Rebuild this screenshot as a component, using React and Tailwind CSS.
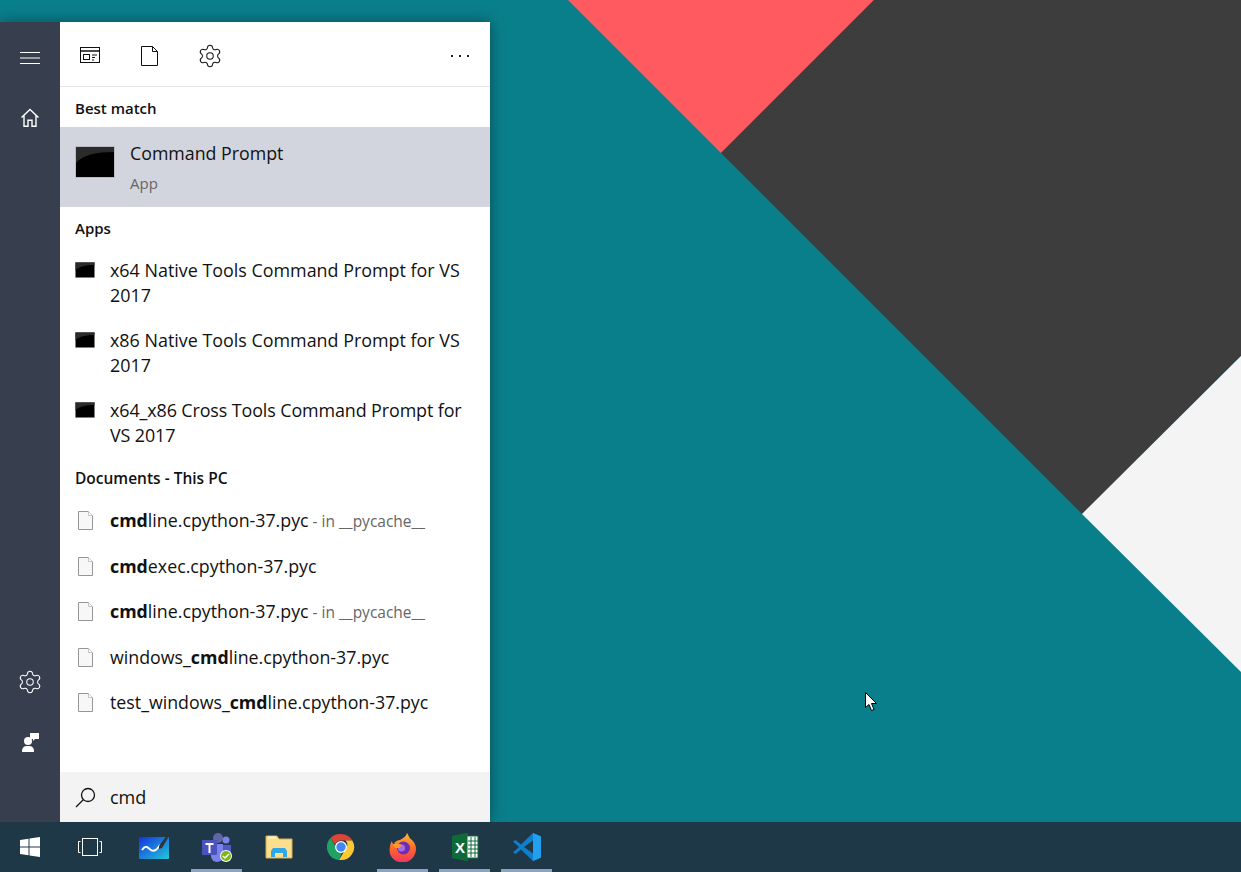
import React from 'react';
import { Settings } from 'lucide-react';

const FONT = "font-['Open_Sans','Noto_Sans',sans-serif]";

const apps = [
  { lines: ['x64 Native Tools Command Prompt for VS', '2017'], cls: '' },
  { lines: ['x86 Native Tools Command Prompt for VS', '2017'], cls: '' },
  { lines: ['x64_x86 Cross Tools Command Prompt for', 'VS 2017'], cls: 'tracking-[-0.1px]' },
];

const docs = [
  { pre: '', bold: 'cmd', post: 'line.cpython-37.pyc', note: ' - in __pycache__' },
  { pre: '', bold: 'cmd', post: 'exec.cpython-37.pyc' },
  { pre: '', bold: 'cmd', post: 'line.cpython-37.pyc', note: ' - in __pycache__' },
  { pre: 'windows_', bold: 'cmd', post: 'line.cpython-37.pyc' },
  { pre: 'test_windows_', bold: 'cmd', post: 'line.cpython-37.pyc' },
];

const TerminalIcon = ({ size }) => (
  <svg width={size} height={size * 0.8} viewBox="0 0 40 32" className="shrink-0">
    <rect x="0.5" y="0.5" width="39" height="31" fill="#000" stroke="#b9bcc4" />
    <path d="M1 17C7 9 22 6 39 6V1H1z" fill="#2b2b2b" />
  </svg>
);

const DocIcon = () => (
  <svg width="15" height="19" viewBox="0 0 15 19" className="shrink-0">
    <path d="M.5.5h10l4 4v14H.5z" fill="#f7f7f7" stroke="#969696" />
    <path d="M10.500.5v4h4" fill="#fff" stroke="#c4c4c4" />
  </svg>
);

const SectionTitle = ({ children, className }) => (
  <div className={`px-[15px] font-semibold text-[#111] leading-5 ${className}`}>{children}</div>
);

const Wallpaper = () => (
  <svg className="absolute inset-0" width="1241" height="872" viewBox="0 0 1241 872">
    <rect width="1241" height="872" fill="#0a7f8c" />
    <polygon points="568,0 874,0 721,153" fill="#ff5a5f" />
    <polygon points="874,0 1241,0 1241,356 1082,514 721,153" fill="#3d3d3d" />
    <polygon points="1241,356 1082,514 1241,672" fill="#f4f4f4" />
  </svg>
);

const Rail = () => (
  <div className="w-[60px] shrink-0 bg-[#373f4e] flex flex-col items-center text-white">
    <svg width="20" height="12" viewBox="0 0 20 12" className="mt-[30px]" stroke="#fff" fill="none">
      <path d="M0 .5h20M0 6h20M0 11.500h20" />
    </svg>
    <svg width="20" height="20" viewBox="0 0 20 20" className="mt-[44px]" stroke="#fff" strokeWidth="1.400" fill="none">
      <path d="M1.500 9.500 10 1.500l8.500 8M4 7.500v10.800h4v-6h4v6h4V7.500" />
    </svg>
    <Settings size={26} strokeWidth={0.95} className="mt-auto" />
    <svg width="18" height="20" viewBox="0 0 18 20" className="mt-[37px] mb-[70px]" fill="#fff">
      <circle cx="7" cy="9" r="4" />
      <path d="M1 20c0-5 2-6 6-6s6 1 6 6z" />
      <path d="M9 1h9v6h-4l-2 2V7H9z" />
    </svg>
  </div>
);

const Toolbar = () => (
  <div className="h-[65px] shrink-0 flex items-center border-b border-[#e6e6e6] pl-[20px] pr-[21px]">
    <svg width="20" height="17" viewBox="0 0 20 17" fill="none" stroke="#111" className="mt-[3px]">
      <rect x=".5" y=".5" width="19" height="15" />
      <path d="M1 4h18" strokeWidth="1.500" />
      <rect x="3.500" y="7.500" width="6" height="5" />
      <path d="M12 8h5M12 10.500h3M12 13h2" />
    </svg>
    <svg width="17" height="20" viewBox="0 0 17 20" fill="none" stroke="#111" className="ml-[41px] mt-[3px]">
      <path d="M.5.500h11l5 5v14H.500zM11.500.500v5h5" />
    </svg>
    <Settings size={26} strokeWidth={0.95} color="#111" className="ml-[39px] mt-[3px]" />
    <div className="ml-auto flex gap-[6px] mt-[3px]">
      <span className="w-[2px] h-[2px] bg-[#222]" />
      <span className="w-[2px] h-[2px] bg-[#222]" />
      <span className="w-[2px] h-[2px] bg-[#222]" />
    </div>
  </div>
);

const SearchPanel = () => (
  <div className="relative flex h-[800px] w-[490px] shadow-[0_0_14px_rgba(0,0,0,0.4)]">
    <Rail />
    <div className={`flex-1 flex flex-col bg-white text-[#111] ${FONT}`}>
      <Toolbar />
      <SectionTitle className="pt-[11px] pb-[9px] text-[15px]">Best match</SectionTitle>
      <div className="h-[80px] shrink-0 bg-[#d2d5dd] flex items-center pl-[15px]">
        <div className="mt-[-11px]"><TerminalIcon size={40} /></div>
        <div className="ml-[15px] pt-[1px]">
          <div className="text-[17.8px] leading-[30px]">Command Prompt</div>
          <div className="text-[15px] leading-[30px] text-[#666]">App</div>
        </div>
      </div>
      <SectionTitle className="pt-[11px] pb-[9px] text-[15px]">Apps</SectionTitle>
      {apps.map((app, i) => (
        <div key={i} className="h-[70px] shrink-0 flex pl-[15px] pt-[11px]">
          <div className="w-[20px] pt-[4px]"><TerminalIcon size={20} /></div>
          <div className={`ml-[15px] text-[17.9px] leading-[25px] whitespace-nowrap ${app.cls}`}>
            <div>{app.lines[0]}</div>
            <div>{app.lines[1]}</div>
          </div>
        </div>
      ))}
      <SectionTitle className="pt-[11px] pb-[10px] text-[15.5px]">Documents - This PC</SectionTitle>
      {docs.map((d, i) => (
        <div key={i} className="h-[45.5px] shrink-0 flex items-center pl-[18px]">
          <DocIcon />
          <div className="ml-[17px] text-[17.8px] whitespace-nowrap">
            {d.pre}<b className="font-bold">{d.bold}</b>{d.post}
            {d.note && <span className="text-[15.5px] text-[#666]">{d.note}</span>}
          </div>
        </div>
      ))}
      <div className="mt-auto h-[50px] shrink-0 bg-[#f3f3f3] flex items-center pl-[15px]">
        <svg width="21" height="21" viewBox="0 0 21 21" fill="none" stroke="#111" strokeWidth="1.300">
          <circle cx="13" cy="8" r="6.500" />
          <path d="M8.500 12.500 1 20" />
        </svg>
        <span className="ml-[14px] text-[18px]">cmd</span>
      </div>
    </div>
  </div>
);

const TaskButton = ({ on, children }) => (
  <div className="relative w-[51px] h-[50px] flex items-center justify-center shrink-0">
    {children}
    {on && <span className="absolute bottom-0 left-0 right-0 h-[3px] bg-[#8ea3bf]" />}
  </div>
);

const Taskbar = () => (
  <div className="absolute left-0 right-0 bottom-0 h-[50px] bg-[#1f3848] flex items-center">
    <div className="w-[60px] flex justify-center">
      <svg width="20" height="20" viewBox="0 0 20 20" fill="#fff">
        <path d="M0 3l8.500-1.300v7.800H0zM9.500 1.500 20 0v9.500H9.500zM0 10.500h8.500v7.800L0 17zM9.500 10.500H20V20L9.500 18.500z" />
      </svg>
    </div>
    <div className="w-[60px] flex justify-center">
      <svg width="24" height="18" viewBox="0 0 24 18" fill="none" stroke="#fff">
        <rect x="4.500" y=".5" width="15" height="17" />
        <path d="M2.500 3.500H.5v11h2M21.500 3.500h2v11h-2" />
      </svg>
    </div>
    <div className="flex gap-[11px] ml-[9px]">
      <TaskButton>
        <svg width="31" height="26" viewBox="0 0 31 26">
          <defs>
            <linearGradient id="wb" x1="0" y1="0" x2="1" y2="1">
              <stop offset="0" stopColor="#1433e0" />
              <stop offset="1" stopColor="#22c8d8" />
            </linearGradient>
          </defs>
          <rect y="3" width="30" height="22" rx="1" fill="url(#wb)" />
          <path d="M3 16c4-6 6-2 9 0s6 0 9-5" stroke="#fff" strokeWidth="2" fill="none" />
          <path d="M20 12 28 1l2 1-7 12-3 1z" fill="#333" />
        </svg>
      </TaskButton>
      <TaskButton on>
        <svg width="32" height="30" viewBox="0 0 32 30">
          <circle cx="17" cy="6" r="5" fill="#6264a7" />
          <circle cx="25" cy="8" r="3.500" fill="#7b83eb" />
          <path d="M10 12h12v12a6 6 0 0 1-12 0z" fill="#7b83eb" />
          <path d="M22 13h8v8a4 4 0 0 1-8 0z" fill="#5059c9" />
          <rect x="1" y="8" width="15" height="15" rx="1" fill="#4b53bc" />
          <path d="M4.500 11h8v2h-3v8h-2v-8h-3z" fill="#fff" />
          <circle cx="25" cy="24" r="6" fill="#fff" />
          <circle cx="25" cy="24" r="5" fill="#7cb518" />
          <path d="m22 24 2 2 4-4" stroke="#fff" strokeWidth="1.500" fill="none" />
        </svg>
      </TaskButton>
      <TaskButton>
        <svg width="28" height="24" viewBox="0 0 28 24">
          <path d="M1 1h11l2 3h13v19H1z" fill="#fbdf8c" stroke="#d9ac4e" />
          <rect x="3" y="1.500" width="8" height="2" fill="#f7f1d5" />
          <path d="M6 22v-6l2-3h12l2 3v6h-4v-4H10v4z" fill="#2fa8e6" />
        </svg>
      </TaskButton>
      <TaskButton>
        <svg width="28" height="28" viewBox="0 0 28 28">
          <path d="M14 1a13 13 0 0 1 11.300 6.500H14a6.500 6.500 0 0 0-6 4L3.500 5A13 13 0 0 1 14 1z" fill="#db4437" />
          <path d="M3.500 5 8.800 14a6 6 0 0 0 7 3.500L12 26.900A13 13 0 0 1 3.500 5z" fill="#1ea362" />
          <path d="M25.300 7.500A13 13 0 0 1 12 26.900L18 17a6.500 6.500 0 0 0 .5-9.500z" fill="#fcc934" />
          <circle cx="14" cy="14" r="6" fill="#fff" />
          <circle cx="14" cy="14" r="4.700" fill="#4285f4" />
        </svg>
      </TaskButton>
      <TaskButton on>
        <svg width="28" height="29" viewBox="0 0 28 29">
          <defs>
            <linearGradient id="ff" x1="0.500" y1="0" x2="0.500" y2="1">
              <stop offset="0" stopColor="#ffbd2e" />
              <stop offset="0.500" stopColor="#ff6a2b" />
              <stop offset="1" stopColor="#f0355f" />
            </linearGradient>
          </defs>
          <path d="M18 0c2 3 2 5 5 7 4 4 5 9 3 14a13.500 13.500 0 0 1-25 0C0 16 1 11 3 8c0 2 1 3 2 3 1-3 4-4 6-4 3-2 6-3 7-7z" fill="url(#ff)" />
          <circle cx="14.500" cy="15" r="6.500" fill="#6b2fb5" />
          <circle cx="12.500" cy="15" r="3.500" fill="#a86ce0" />
          <path d="M4 12c3-2 6-2 9 0l-3 3H6z" fill="#ff9a22" />
        </svg>
      </TaskButton>
      <TaskButton on>
        <svg width="28" height="28" viewBox="0 0 28 28">
          <path d="M1 3 17 0v28L1 25z" fill="#0f6a3a" />
          <rect x="16" y="3" width="11" height="22" fill="#fff" stroke="#0f6a3a" />
          <path d="M20 4v20M24 4v20M17 8h10M17 12h10M17 16h10M17 20h10" stroke="#0f6a3a" />
          <path d="M1 3 16 0v28L1 25z" fill="#0f6a3a" />
          <text x="4" y="20" fill="#fff" fontSize="15" fontWeight="bold" fontFamily="Liberation Sans, sans-serif">X</text>
        </svg>
        <span className="absolute bottom-0 right-0 w-[11px] h-[3px] bg-[#63768c]" />
      </TaskButton>
      <TaskButton on>
        <svg width="30" height="30" viewBox="0 0 30 30">
          <path d="M21 1 29 4.500v21L21 29 9 17.500 3.500 22 1 20.500 7 15 1 9.500 3.500 8 9 12.500z" fill="#0f7fcc" />
          <path d="M21 1 29 4.500v21L21 29z" fill="#20a0ee" />
          <path d="M21 8.500v13L12 15z" fill="#1f3848" />
        </svg>
      </TaskButton>
    </div>
  </div>
);

const Cursor = () => (
  <svg className="absolute left-[865px] top-[692px]" width="12" height="20" viewBox="0 0 12 20">
    <path d="M.5.5v15l3.500-3 2.500 6 2.500-1-2.500-6h5z" fill="#fff" stroke="#000" />
  </svg>
);

export default function App() {
  return (
    <div className="relative w-[1241px] h-[872px] overflow-hidden pt-[22px]">
      <Wallpaper />
      <SearchPanel />
      <Taskbar />
      <Cursor />
    </div>
  );
}
